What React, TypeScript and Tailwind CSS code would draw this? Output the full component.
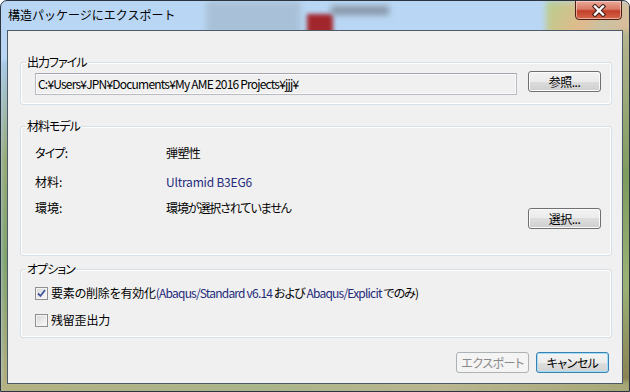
import React from 'react';

const font = "font-['Noto_Sans_CJK_JP',sans-serif] [font-feature-settings:'palt']";

function WinButton({ label, kind = 'normal' }: { label: string; kind?: 'normal' | 'default' | 'disabled' }) {
  const look =
    kind === 'disabled'
      ? 'border-[#adb2b5] bg-[#f4f4f4] text-[#8a8a8a]'
      : kind === 'default'
      ? 'border-[#3c7fb1] bg-[linear-gradient(#f4f4f4_0%,#ececec_50%,#dfdfdf_50%,#d2d2d2_100%)] shadow-[inset_0_0_0_1px_#9fe0f8] text-black'
      : 'border-[#707070] bg-[linear-gradient(#f2f2f2_0%,#ebebeb_50%,#dddddd_50%,#cfcfcf_100%)] shadow-[inset_0_0_0_1px_#fbfbfb] text-black';
  return (
    <div className={`w-[73px] h-[21px] shrink-0 flex items-center justify-center rounded-[3px] border text-[12px] leading-[16px] tracking-[-0.5px] ${look}`}>
      {label}
    </div>
  );
}

function Group({ title, className, children }: { title: string; className: string; children: React.ReactNode }) {
  return (
    <fieldset className="mx-[12px] w-[592px] border border-[#d5dfe5] rounded-[3px] shadow-[inset_0_0_0_1px_#ffffff]">
      <legend className="ml-[5px] px-[1px] text-[12px] leading-[16px] tracking-[-1px] text-black">{title}</legend>
      <div className={className}>{children}</div>
    </fieldset>
  );
}

function CheckBox({ checked }: { checked?: boolean }) {
  return (
    <div className="w-[13px] h-[13px] shrink-0 border border-[#8e8f8f] bg-[linear-gradient(135deg,#d6d6d6,#fbfbfb)] shadow-[inset_0_0_0_1px_#f4f4f4] flex items-center justify-center">
      {checked && (
        <svg width="11" height="11" viewBox="0 0 11 11">
          <path d="M2 5.5 L4.5 8 L9 2" fill="none" stroke="#41579f" strokeWidth="1.8" />
        </svg>
      )}
    </div>
  );
}

export default function App() {
  const navy = 'text-[#1f2b7c] tracking-[-0.8px]';
  return (
    <div className={`w-[630px] h-[392px] relative overflow-hidden rounded-t-[7px] border border-[#2c3440] bg-[#b9d7f4] ${font}`}>
      {/* blurred desktop behind the glass frame */}
      <div className="absolute left-[205px] top-0 w-[95px] h-[34px] bg-[#a9c1d8] blur-[3px]" />
      <div className="absolute left-[306px] top-[13px] w-[26px] h-[22px] bg-[#a2272d] blur-[2px]" />
      <div className="absolute left-[330px] top-[5px] w-[58px] h-[9px] bg-[#8795a6] blur-[3px]" />
      <div className="absolute left-[545px] top-0 w-[90px] h-[40px] bg-[linear-gradient(120deg,#b7cf8e,#e2b98c_45%,#c9c2a3_60%,#e4bb95)] blur-[3px]" />
      <div className="absolute left-[612px] top-[30px] w-[20px] h-[362px] bg-[linear-gradient(#b7b491,#7e9c5e_40%,#9bb276_70%,#8a7a4e)] blur-[2px]" />
      <div className="absolute left-0 top-[60px] w-[10px] h-[332px] bg-[linear-gradient(#a8c8e4,#97a873_30%,#7fa16a_60%,#b6ad7d)] blur-[2px]" />
      <div className="absolute left-0 top-[380px] w-[630px] h-[14px] bg-[linear-gradient(90deg,#b3b283,#aab58a_40%,#b9b58f_70%,#a6a878)] blur-[2px]" />

      <div className="relative flex flex-col h-full">
        {/* title bar */}
        <div className="h-[28px] flex items-start">
          <div className="pl-[7px] pt-[6px] text-[12px] leading-[16px] text-black [font-feature-settings:normal]">構造パッケージにエクスポート</div>
          <div className="ml-auto mr-[7px] -mt-px w-[47px] h-[20px] rounded-b-[4px] border border-[#4d1e17] bg-[linear-gradient(#e9a99a_0%,#d97a66_45%,#c23f29_55%,#d4664a_100%)] shadow-[inset_0_0_0_1px_rgba(255,220,210,0.6)] flex items-center justify-center">
            <svg width="16" height="13" viewBox="0 0 16 13">
              <path d="M4 2.5 L12 10.5 M12 2.5 L4 10.5" stroke="#3a1c16" strokeWidth="4.4" strokeLinecap="square" />
              <path d="M4 2.5 L12 10.5 M12 2.5 L4 10.5" stroke="#ffffff" strokeWidth="2.4" strokeLinecap="square" />
            </svg>
          </div>
        </div>

        {/* client area */}
        <div className="ml-[6px] mr-[7px] mt-px w-[616px] h-[354px] border border-[#4c5a68] bg-[#f0f0f0] flex flex-col">
          <div className="mt-[23px]">
            <Group title="出力ファイル" className="pt-px pb-[9px] pl-[14px] pr-[10px]">
              <div className="flex items-start gap-[11px]">
                <div className="mt-[2px] w-[482px] h-[22px] border border-[#b9bcc2] border-t-[#a4a7ad] shadow-[inset_0_0_0_1px_#fafafa] bg-[#f0f0f0] flex items-center pl-[2px] text-[12px] leading-[16px] tracking-[-0.8px] text-black whitespace-nowrap">
                  C:¥Users¥JPN¥Documents¥My AME 2016 Projects¥jjj¥
                </div>
                <WinButton label="参照..." />
              </div>
            </Group>
          </div>

          <div className="mt-[13px]">
            <Group title="材料モデル" className="pt-[11px] pb-[26px] pl-[14px] pr-[10px]">
              <div className="flex flex-col text-[12px] leading-[16px] text-black">
                <div className="flex">
                  <div className="w-[131px] tracking-[-0.8px]">タイプ:</div>
                  <div className="tracking-[-0.6px]">弾塑性</div>
                </div>
                <div className="flex mt-[13px]">
                  <div className="w-[131px]">材料:</div>
                  <div className="text-[#1f2b7c] tracking-[-0.2px]">Ultramid B3EG6</div>
                </div>
                <div className="flex items-start mt-[10px]">
                  <div className="w-[131px]">環境:</div>
                  <div className="tracking-[-1.1px]">環境が選択されていません</div>
                  <div className="ml-auto mt-[8px]">
                    <WinButton label="選択..." />
                  </div>
                </div>
              </div>
            </Group>
          </div>

          <div className="mt-[5px]">
            <Group title="オプション" className="pt-[8px] pb-[9px] pl-[14px] pr-[10px]">
              <div className="flex flex-col text-[12px] leading-[16px] text-black">
                <div className="flex items-center gap-[3px]">
                  <CheckBox checked />
                  <div className="whitespace-pre">
                    <span className="tracking-[-0.2px]">要素の削除を有効化</span>
                    <span className={navy}>(Abaqus/Standard v6.14 </span>
                    <span className="tracking-[-1px]">および</span>
                    <span className={navy}> Abaqus/Explicit </span>
                    <span className="tracking-[-1px]">でのみ)</span>
                  </div>
                </div>
                <div className="flex items-center gap-[3px] mt-[11px]">
                  <CheckBox />
                  <div className="tracking-[-0.2px]">残留歪出力</div>
                </div>
              </div>
            </Group>
          </div>

          <div className="mt-[14px] mr-[13px] flex justify-end gap-[7px]">
            <WinButton label="エクスポート" kind="disabled" />
            <WinButton label="キャンセル" kind="default" />
          </div>
        </div>
      </div>
    </div>
  );
}
